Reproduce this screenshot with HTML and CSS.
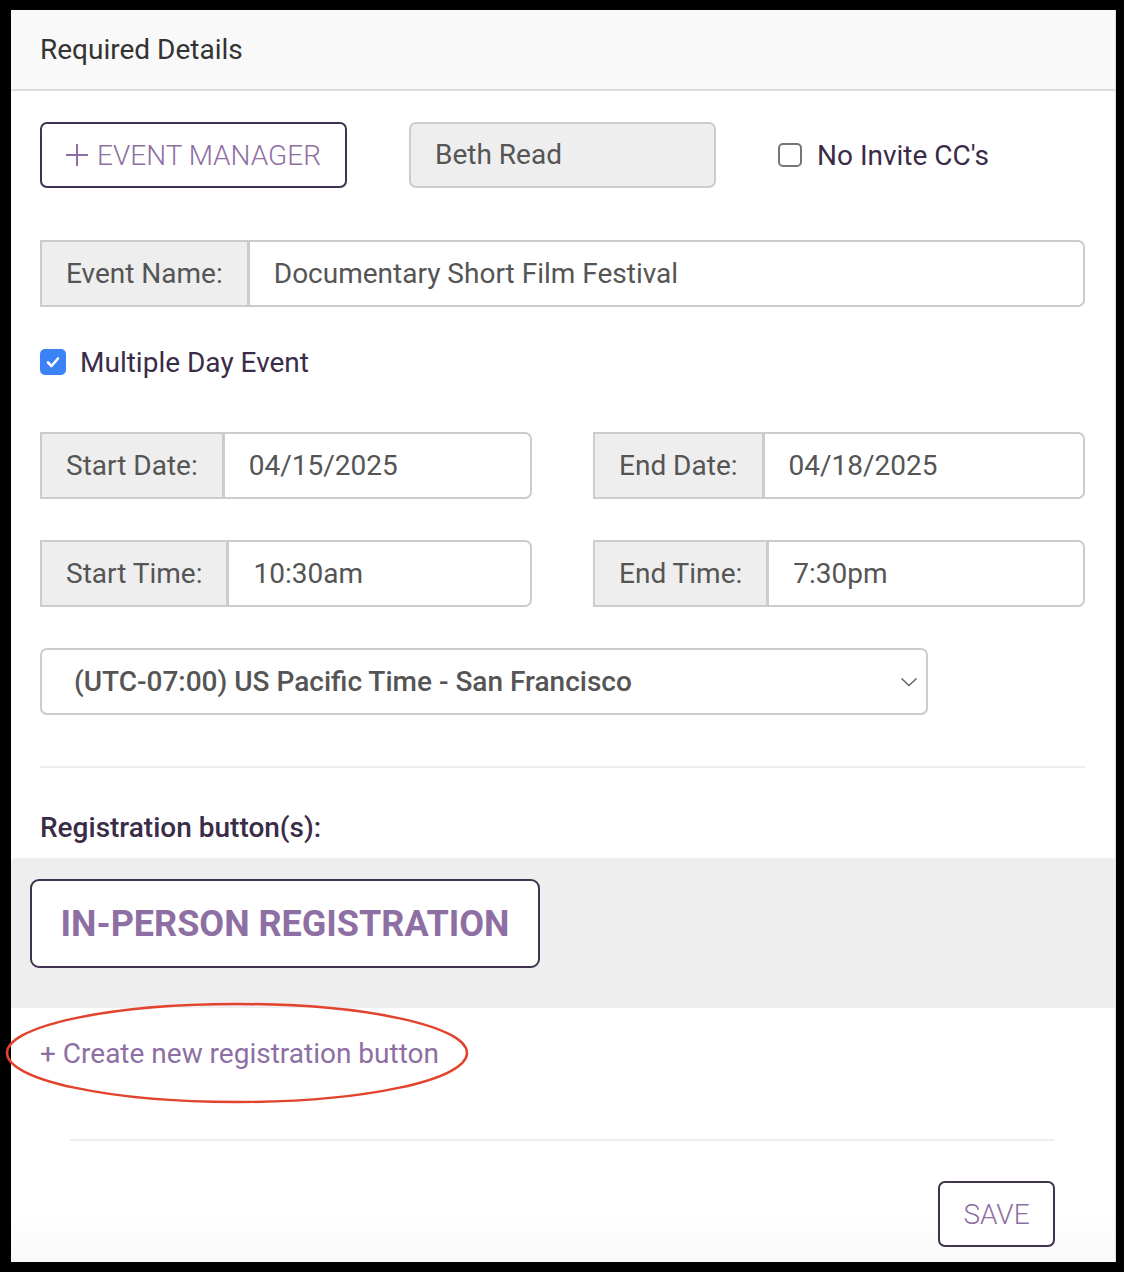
FILE: index.html
```html
<!DOCTYPE html>
<html lang="en">
<head>
    <meta charset="UTF-8">
    <title>Required Details</title>
    <link rel="stylesheet" href="styles.css">
</head>
<body>
    <div class="panel">
        <div class="panel-heading">Required Details</div>

        <div class="panel-body">
            <div class="top-row">
                <button class="btn-outline manager-btn">
                    <svg width="22" height="22" viewBox="0 0 22 22"><path d="M11 0 V22 M0 11 H22" stroke="#8e6fa3" stroke-width="2"/></svg>
                    EVENT MANAGER
                </button>
                <div class="manager-name">Beth Read</div>
                <label class="check">
                    <span class="box"></span>
                    No Invite CC's
                </label>
            </div>

            <div class="input-group wide">
                <span class="addon">Event Name:</span>
                <span class="field">Documentary Short Film Festival</span>
            </div>

            <label class="check multi-day">
                <span class="box checked">
                    <svg width="16" height="16" viewBox="0 0 16 16"><path d="M3 8.5 L6.5 12 L13 4.5" fill="none" stroke="#fff" stroke-width="2.6" stroke-linecap="round" stroke-linejoin="round"/></svg>
                </span>
                Multiple Day Event
            </label>

            <div class="pair-row first">
                <div class="input-group">
                    <span class="addon">Start Date:</span>
                    <span class="field">04/15/2025</span>
                </div>
                <div class="input-group">
                    <span class="addon">End Date:</span>
                    <span class="field">04/18/2025</span>
                </div>
            </div>

            <div class="pair-row">
                <div class="input-group">
                    <span class="addon">Start Time:</span>
                    <span class="field">10:30am</span>
                </div>
                <div class="input-group">
                    <span class="addon">End Time:</span>
                    <span class="field">7:30pm</span>
                </div>
            </div>

            <div class="select">
                <span>(UTC-07:00) US Pacific Time - San Francisco</span>
                <svg width="18" height="10" viewBox="0 0 18 10"><path d="M1.5 1.5 L9 8.5 L16.5 1.5" fill="none" stroke="#666" stroke-width="1.6"/></svg>
            </div>

            <hr class="divider">

            <div class="reg-title">Registration button(s):</div>

            <div class="reg-list">
                <button class="btn-outline reg-btn">IN-PERSON REGISTRATION</button>
            </div>

            <a class="create-link" href="#">+ Create new registration button</a>

            <hr class="footer-line">

            <div class="footer">
                <button class="btn-outline save-btn">SAVE</button>
            </div>
        </div>
    </div>

    <!-- red annotation round the link -->
    <svg class="annotation" width="466" height="104" viewBox="0 0 466 104">
        <ellipse cx="233" cy="52" rx="230" ry="49" fill="none" stroke="#e2432d" stroke-width="2.5"/>
    </svg>
</body>
</html>
```

FILE: styles.css
```css
body {
    margin: 0;
    padding: 10px 8px 10px 11px;
    background: #000;
    font-family: Roboto, "Liberation Sans", sans-serif;
    position: relative;
}

.panel {
    background: linear-gradient(#fff 96%, #f9f9f9);
    border-right: 1px solid #ddd;
    height: 1252px;
    box-sizing: border-box;
}

.panel-heading {
    height: 79px;
    line-height: 79px;
    padding-left: 29px;
    background: #f9f9f9;
    border-bottom: 2px solid #ddd;
    font-size: 28px;
    color: #333;
}

.panel-body {
    padding: 31px 30px 0 29px;
}

.top-row {
    display: grid;
    grid-template-columns: 369px 369px 1fr;
    align-items: center;
}

.btn-outline {
    font-family: inherit;
    background: #fff;
    border: 2px solid #3f3350;
    border-radius: 7px;
    color: #8e6fa3;
    cursor: pointer;
    padding: 0;
}

.manager-btn {
    width: 307px;
    height: 66px;
    font-size: 28px;
    font-weight: 300;
    display: flex;
    align-items: center;
    gap: 9px;
    padding-left: 24px;
}

.manager-name {
    width: 307px;
    height: 66px;
    box-sizing: border-box;
    background: #eee;
    border: 2px solid #ccc;
    border-radius: 7px;
    padding-left: 24px;
    line-height: 62px;
    font-size: 28px;
    color: #555;
}

.check {
    display: flex;
    align-items: center;
    gap: 15px;
    font-size: 28px;
    color: #3a2c48;
}

.box {
    width: 24px;
    height: 24px;
    box-sizing: border-box;
    border: 2px solid #767676;
    border-radius: 5px;
    display: flex;
    align-items: center;
    justify-content: center;
    flex: none;
}

.box.checked {
    width: 26px;
    height: 26px;
    background: #3b82f6;
    border: none;
}

.multi-day {
    margin-top: 37px;
    height: 36px;
    gap: 14px;
}

.input-group {
    display: flex;
    height: 67px;
    box-sizing: border-box;
    border: 2px solid #ccc;
    border-radius: 0 7px 7px 0;
    font-size: 28px;
    color: #555;
}

.input-group.wide {
    margin-top: 52px;
}

.addon {
    background: #eee;
    border-right: 3px solid #ccc;
    padding: 0 24px;
    display: flex;
    align-items: center;
}

.field {
    display: flex;
    align-items: center;
    padding-left: 24px;
    background: #fff;
    border-radius: 0 6px 6px 0;
    flex: 1;
}

.pair-row {
    display: grid;
    grid-template-columns: 492px 492px;
    justify-content: space-between;
    margin-top: 41px;
}

.pair-row.first {
    margin-top: 52px;
}

.select {
    margin-top: 41px;
    width: 888px;
    height: 67px;
    box-sizing: border-box;
    border: 2px solid #ccc;
    border-radius: 7px;
    display: flex;
    align-items: center;
    justify-content: space-between;
    padding: 0 8px 0 32px;
    font-size: 28px;
    font-weight: 500;
    color: #555;
}

.divider {
    margin: 51px 0 0;
    border: none;
    border-top: 2px solid #eee;
}

.reg-title {
    margin-top: 42px;
    line-height: 36px;
    font-size: 28px;
    font-weight: 500;
    color: #3a2c48;
}

.reg-list {
    margin: 12px -30px 0 -29px;
    background: #eee;
    border-radius: 5px 0 0 0;
    padding: 21px 19px 40px;
}

.reg-btn {
    width: 510px;
    height: 89px;
    border-radius: 9px;
    font-size: 36px;
    font-weight: 700;
}

.create-link {
    display: block;
    margin-top: 28px;
    line-height: 36px;
    font-size: 28px;
    color: #8e6fa3;
    text-decoration: none;
}

.footer-line {
    margin: 67px 30px 0 30px;
    border: none;
    border-top: 2px solid #eee;
}

.footer {
    padding: 40px 30px 0 0;
    display: flex;
    justify-content: flex-end;
}

.save-btn {
    width: 117px;
    height: 66px;
    font-size: 28px;
    font-weight: 300;
}

.annotation {
    position: absolute;
    left: 4px;
    top: 1001px;
}
```
